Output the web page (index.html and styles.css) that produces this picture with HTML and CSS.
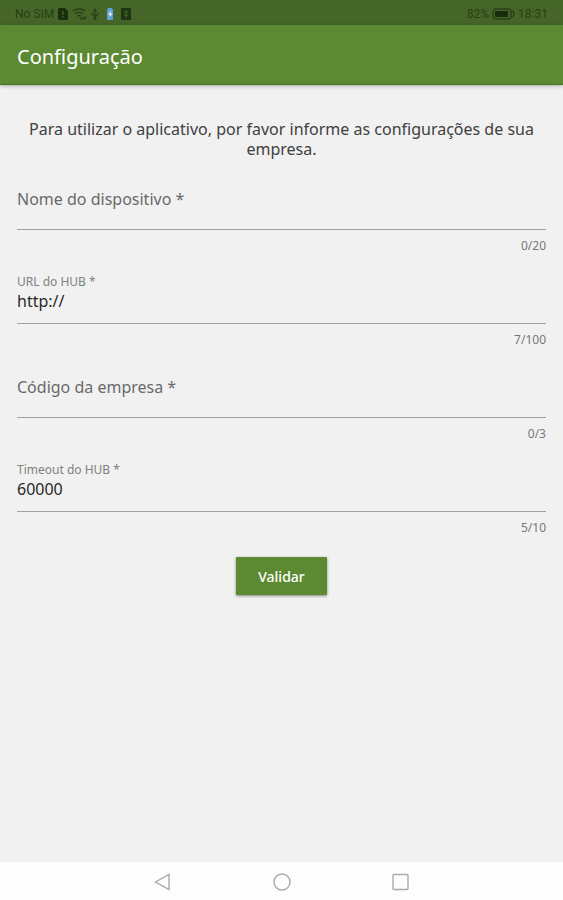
FILE: index.html
```html
<!DOCTYPE html>
<html lang="pt-BR">
<head>
<meta charset="utf-8">
<meta name="viewport" content="width=device-width, initial-scale=1">
<title>Configuração</title>
<link rel="stylesheet" href="styles.css">
</head>
<body>
<div class="statusbar">
    <div class="status-group">
        <span>No SIM</span>
        <svg class="ic-sim" width="10" height="12" viewBox="0 0 10 12"><path fill="#1a2e0d" d="M1 0h6l3 3v8l-1 1H1l-1-1V1z"/><path stroke="#456628" stroke-width="1.4" d="M5 3v4M5 8v1.500"/></svg>
        <svg class="ic-wifi" width="15" height="12" viewBox="0 0 15 12" fill="none" stroke="#284016" stroke-width="1.4"><path d="M1 3q6-4 12 0M3 5.700q4-3 8 0M5 8.300q2-1.500 4 0M8 10.500h6M12 8.500l2 2"/></svg>
        <svg class="ic-usb" width="8" height="12" viewBox="0 0 8 12" fill="none" stroke="#284016" stroke-width="1.2"><path d="M4 11V1M2.500 3L4 1l1.500 2M1 4.500v2l3 2 3-2v-2"/><circle cx="4" cy="10.500" r="1" fill="#284016"/></svg>
        <svg class="ic-charge" width="8" height="12" viewBox="0 0 8 12"><path fill="#5f9fd6" d="M1 1h1V0h4v1h1v11H1z"/><path fill="#f2f8fc" d="M5 2.500L2 6.500h2L3.500 9.500l3-4h-2z"/></svg>
        <svg class="ic-app" width="10" height="12" viewBox="0 0 10 12"><rect width="10" height="12" rx="1" fill="#1f3411"/><path fill="none" stroke="#456628" d="M5 2v8M3 4h4M3 7h4"/></svg>
    </div>
    <div class="status-group right">
        <span>82%</span>
        <svg class="ic-battery" width="23" height="12" viewBox="0 0 23 12"><rect x="1" y="1" width="18" height="10" rx="2.5" fill="none" stroke="#284016" stroke-width="1.4"/><rect x="3" y="3" width="13" height="6" fill="#182b0c"/><path d="M20 3q2 1 2 3t-2 3" fill="none" stroke="#284016" stroke-width="1.4"/></svg>
        <span class="time">18:31</span>
    </div>
</div>
<header class="appbar">
    <h1>Configuração</h1>
</header>

<main class="content">
    <p class="intro">Para utilizar o aplicativo, por favor informe as configurações de sua empresa.</p>
    <form class="config">
        <div class="field">
            <div class="box empty">
                <label for="nome">Nome do dispositivo *</label>
                <input type="text" id="nome" maxlength="20">
            </div>
            <div class="counter">0/20</div>
        </div>
        <div class="field">
            <div class="box">
                <label for="url">URL do HUB *</label>
                <input type="text" id="url" maxlength="100" value="http://">
            </div>
            <div class="counter">7/100</div>
        </div>
        <div class="field">
            <div class="box empty">
                <label for="codigo">Código da empresa *</label>
                <input type="text" id="codigo" maxlength="3">
            </div>
            <div class="counter">0/3</div>
        </div>
        <div class="field">
            <div class="box">
                <label for="timeout">Timeout do HUB *</label>
                <input type="text" id="timeout" maxlength="10" value="60000">
            </div>
            <div class="counter">5/10</div>
        </div>
        <button type="button" class="validar">Validar</button>
    </form>
</main>

<nav class="navbar">
    <button type="button" aria-label="Voltar"><svg width="18" height="18" viewBox="0 0 18 18"><path d="M15 1.500v15L1.500 9z"/></svg></button>
    <button type="button" aria-label="Início"><svg width="18" height="18" viewBox="0 0 18 18"><circle cx="9" cy="9" r="8"/></svg></button>
    <button type="button" aria-label="Recentes"><svg width="18" height="18" viewBox="0 0 18 18"><rect x="1" y="1.500" width="15" height="15" rx="1"/></svg></button>
</nav>
</body>
</html>
```
FILE: styles.css
```css
* {
    box-sizing: border-box;
}
body {
    margin: 0;
    min-height: 100vh;
    display: flex;
    flex-direction: column;
    background: #f1f1f1;
    color: #404040;
    font-family: "Noto Sans", "Open Sans", sans-serif;
    font-size: 16px;
    line-height: 20px;
}

.statusbar {
    display: flex;
    justify-content: space-between;
    align-items: center;
    height: 25px;
    padding: 2px 15px 0;
    background: #456628;
    color: #284016;
    font-family: Roboto, sans-serif;
    font-size: 12px;
}
.status-group {
    display: flex;
    align-items: center;
    gap: 4px;
}
.status-group.right {
    gap: 3px;
}
.ic-charge {
    margin: 0 3px;
}

.appbar {
    height: 60px;
    padding: 20px 17px;
    background: #5c8a32;
    border-bottom: 1px solid #447719;
    box-shadow: 0 1px 4px rgba(0, 0, 0, .3);
    color: #fff;
}
.appbar h1 {
    margin: 0;
    font-size: 20px;
    font-weight: 400;
    line-height: 24px;
}

.content {
    flex: 1;
    padding: 34px 17px 20px;
}
.intro {
    margin: 0 0 17px;
    text-align: center;
}

.config {
    display: flex;
    flex-direction: column;
}
.field {
    height: 94px;
}
.box {
    display: flex;
    flex-direction: column;
    height: 54px;
    padding-top: 4px;
    border-bottom: 1px solid #a0a0a0;
}
.box label {
    color: #808080;
    font-size: 12px;
    line-height: 16px;
}
.box.empty {
    padding-top: 12px;
}
.box.empty label {
    color: #696969;
    font-size: 16px;
    line-height: 22px;
}
.box input {
    width: 100%;
    height: 22px;
    padding: 0;
    border: 0;
    outline: 0;
    background: none;
    color: #282828;
    font: inherit;
}
.box.empty input {
    height: 19px;
}
.counter {
    padding-top: 8px;
    color: #777;
    font-size: 12px;
    line-height: 16px;
    text-align: right;
}

.validar {
    align-self: center;
    height: 38px;
    margin-top: 5px;
    padding: 0 22px;
    border: 0;
    border-radius: 1px;
    background: #5c8a32;
    box-shadow: 0 1px 3px rgba(0, 0, 0, .45);
    color: #fff;
    font-family: inherit;
    font-size: 14px;
    font-weight: 500;
}

.navbar {
    display: flex;
    justify-content: center;
    align-items: center;
    gap: 79px;
    height: 38px;
    padding-top: 1px;
    background: #fdfdfd;
}
.navbar button {
    display: flex;
    justify-content: center;
    width: 40px;
    padding: 0;
    border: 0;
    background: none;
}
.navbar svg {
    fill: none;
    stroke: #aaa;
    stroke-width: 1.4;
}
```
